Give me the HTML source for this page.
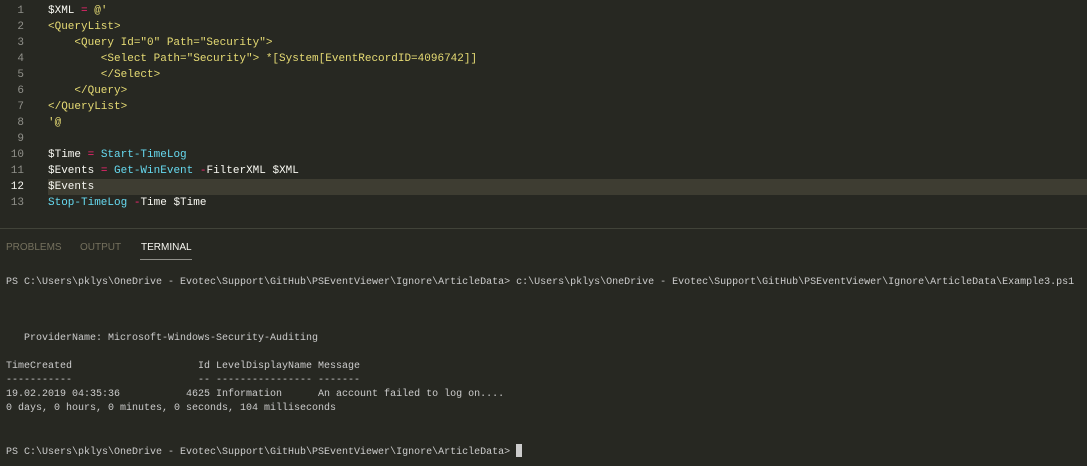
<!DOCTYPE html>
<html><head><meta charset="utf-8"><style>
body{margin:0;width:1087px;height:465px;background:#272822;overflow:hidden;position:relative;font-family:"Liberation Mono",monospace}
.ed{position:absolute;left:0;top:3px;width:1087px}
.l{height:16px;line-height:16px;font-size:11px;white-space:pre;color:#f8f8f2;position:relative}
.n{display:inline-block;width:24px;text-align:right;color:#90908a;margin-right:24px;font-size:11px}
.p{color:#f92672}.c{color:#66d9ef}.y{color:#e6db74}
.panel{position:absolute;left:0;top:228px;width:1087px;height:237px;border-top:1px solid #414339}
.tabs{position:absolute;top:13px;font-family:"Liberation Sans",sans-serif;font-size:10px;color:#75715e}
.t{position:absolute;font-size:10px;white-space:pre;color:#cccccc;left:6px;line-height:14px}
</style></head><body>
<div class="ed">
<div class="l"><span class="n">1</span>$XML <span class="p">=</span> <span class="y">@'</span></div>
<div class="l"><span class="n">2</span><span class="y">&lt;QueryList&gt;</span></div>
<div class="l"><span class="n">3</span><span class="y">    &lt;Query Id="0" Path="Security"&gt;</span></div>
<div class="l"><span class="n">4</span><span class="y">        &lt;Select Path="Security"&gt; *[System[EventRecordID=4096742]]</span></div>
<div class="l"><span class="n">5</span><span class="y">        &lt;/Select&gt;</span></div>
<div class="l"><span class="n">6</span><span class="y">    &lt;/Query&gt;</span></div>
<div class="l"><span class="n">7</span><span class="y">&lt;/QueryList&gt;</span></div>
<div class="l"><span class="n">8</span><span class="y">'@</span></div>
<div class="l"><span class="n">9</span></div>
<div class="l"><span class="n">10</span>$Time <span class="p">=</span> <span class="c">Start-TimeLog</span></div>
<div class="l"><span class="n">11</span>$Events <span class="p">=</span> <span class="c">Get-WinEvent</span> <span class="p">-</span>FilterXML $XML</div>
<div class="l" style="background:linear-gradient(to right,transparent 48px,#3e3d32 48px)"><span class="n" style="color:#f8f8f2">12</span>$Events</div>
<div class="l"><span class="n">13</span><span class="c">Stop-TimeLog</span> <span class="p">-</span>Time $Time</div>
</div>
<div class="panel">
<div class="tabs" style="left:6px">PROBLEMS</div>
<div class="tabs" style="left:80px">OUTPUT</div>
<div class="tabs" style="left:141px;color:#f8f8f2">TERMINAL</div>
<div style="position:absolute;left:140px;top:30px;width:52px;height:1px;background:#90908a"></div>
<div class="t" style="top:47px">PS C:\Users\pklys\OneDrive - Evotec\Support\GitHub\PSEventViewer\Ignore\ArticleData&gt; c:\Users\pklys\OneDrive - Evotec\Support\GitHub\PSEventViewer\Ignore\ArticleData\Example3.ps1</div>
<div class="t" style="top:103px">   ProviderName: Microsoft-Windows-Security-Auditing</div>
<div class="t" style="top:131px">TimeCreated                     Id LevelDisplayName Message
-----------                     -- ---------------- -------
19.02.2019 04:35:36           4625 Information      An account failed to log on....
0 days, 0 hours, 0 minutes, 0 seconds, 104 milliseconds</div>
<div class="t" style="top:215px">PS C:\Users\pklys\OneDrive - Evotec\Support\GitHub\PSEventViewer\Ignore\ArticleData&gt; <span style="display:inline-block;width:6px;height:13px;background:#cccccc;vertical-align:-3px"></span></div>
</div>
</body></html>
